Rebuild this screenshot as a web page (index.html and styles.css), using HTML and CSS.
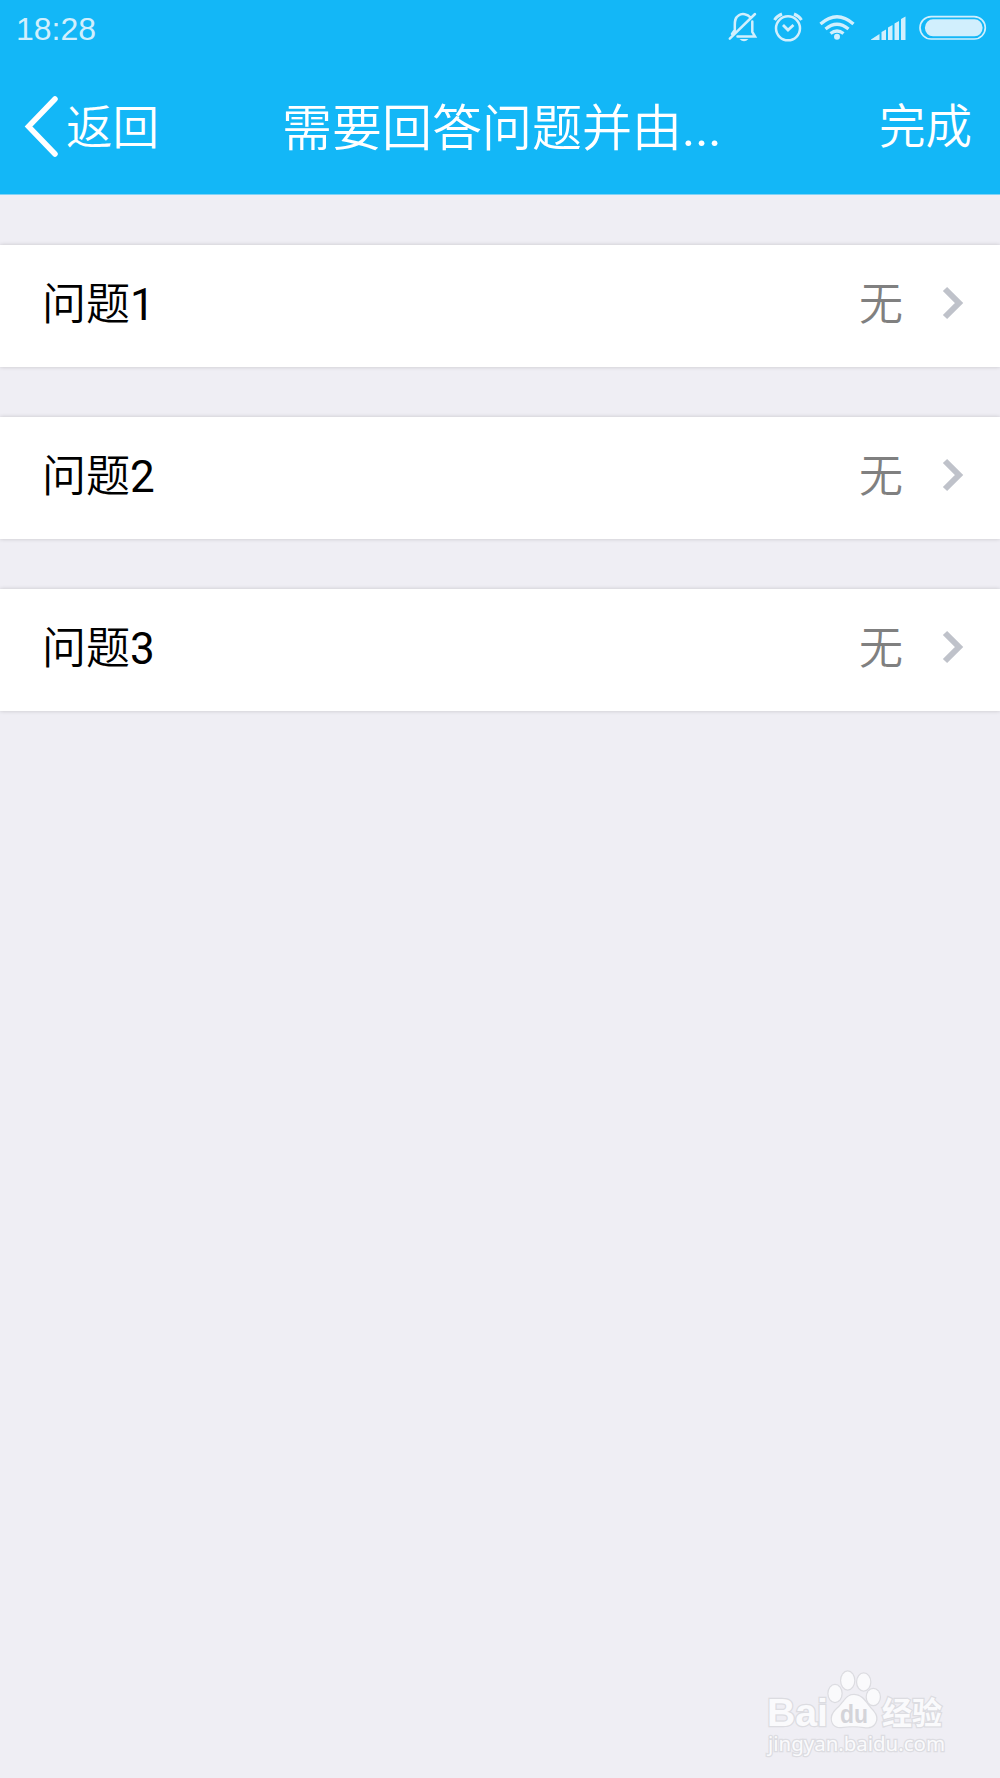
FILE: index.html
```html
<!DOCTYPE html>
<html lang="zh-CN">
<head>
    <meta charset="utf-8">
    <title>需要回答问题</title>
    <link rel="stylesheet" href="styles.css">
</head>
<body>
    <header>
        <div class="status-bar">
            <span class="time">18:28</span>
            <svg class="status-icons" width="260" height="32" viewBox="727 11 260 32" fill="none" stroke="#d1effd" stroke-width="2.5">
                <!-- muted bell -->
                <path d="M750.500 17.500C747.500 14 742 13 738.500 15.500C734.500 18 734.800 22 734.800 26V30L732 34M737.500 36.500H755L752.300 32V21.500M729.800 38.700L755 14" stroke-linecap="round"/>
                <path d="M739.500 39H748.500Q744 43.500 739.500 39Z" fill="#d1effd" stroke="none"/>
                <!-- alarm clock -->
                <circle cx="788" cy="28.300" r="12"/>
                <path d="M783 25L788 30L793.500 25" stroke-width="2.800"/>
                <path d="M774.500 20Q777 16 782 14M794 14Q799 16 801.500 20" stroke-width="3"/>
                <!-- wifi -->
                <path d="M820.500 24Q837 9.500 853.500 24M825.500 29Q837 19.500 848.500 29M830.500 33.500Q837 28.500 843.500 33.500" stroke-width="3.300"/>
                <circle cx="837" cy="36.800" r="3" fill="#d1effd" stroke="none"/>
                <!-- signal -->
                <path d="M871 39.500L879.500 34V40H871ZM881.500 32L886 29.500V40H881.500ZM888 27.500L892.500 25V40H888ZM894.500 23.500L899 21V40H894.500ZM901 19L905.500 16.500V40H901Z" fill="#d1effd" stroke="none"/>
                <!-- battery -->
                <rect x="920" y="16.700" width="65.300" height="22.300" rx="11.150" stroke-width="1.700"/>
                <rect x="925" y="19.300" width="57.500" height="17" rx="8" fill="#d1effd" stroke="none"/>
            </svg>
        </div>
        <div class="nav-bar">
            <a class="back">
                <svg width="34" height="66" viewBox="0 0 34 66">
                    <path d="M31 5L4.500 32.500L31 60" fill="none" stroke="#fff" stroke-width="5.500" stroke-linecap="round"/>
                </svg>
                <span>返回</span>
            </a>
            <h1>需要回答问题并由<span class="dots">...</span></h1>
            <a class="done">完成</a>
        </div>
    </header>

    <main>
        <div class="row">
            <span class="label">问题<span class="num">1</span></span>
            <span class="value">无</span>
            <svg class="arrow" width="22" height="34" viewBox="0 0 22 34"><path d="M3 3L17 17L3 31"/></svg>
        </div>
        <div class="row">
            <span class="label">问题<span class="num">2</span></span>
            <span class="value">无</span>
            <svg class="arrow" width="22" height="34" viewBox="0 0 22 34"><path d="M3 3L17 17L3 31"/></svg>
        </div>
        <div class="row">
            <span class="label">问题<span class="num">3</span></span>
            <span class="value">无</span>
            <svg class="arrow" width="22" height="34" viewBox="0 0 22 34"><path d="M3 3L17 17L3 31"/></svg>
        </div>
    </main>

    <svg class="watermark" width="190" height="92" viewBox="762 1666 190 92">
        <g fill="#fafafc" stroke="#dcdce1" stroke-width="2.500" paint-order="stroke">
            <text class="logo" x="767" y="1726" textLength="61" lengthAdjust="spacingAndGlyphs">Bai</text>
            <ellipse cx="835" cy="1693.500" rx="6.500" ry="8.500"/>
            <ellipse cx="847.700" cy="1680.500" rx="6.500" ry="9"/>
            <ellipse cx="863.700" cy="1682" rx="6.500" ry="8.500"/>
            <ellipse cx="873.300" cy="1697" rx="6.500" ry="8"/>
            <path d="M854 1695C846 1695 844 1703 837 1709C828 1717 832 1728 841 1727C848 1726 858 1726 864 1727C875 1729 880 1719 873 1711C866 1704 863 1695 854 1695Z"/>
            <text class="logo-cn" x="882" y="1724" textLength="60" lengthAdjust="spacingAndGlyphs">经验</text>
            <text class="url" x="768" y="1751" textLength="177" lengthAdjust="spacingAndGlyphs">jingyan.baidu.com</text>
        </g>
        <text class="logo-du" x="840" y="1723" textLength="28" lengthAdjust="spacingAndGlyphs">du</text>
    </svg>
</body>
</html>
```
FILE: styles.css
```css
* {
    box-sizing: border-box;
}
body {
    margin: 0;
    min-height: 1778px;
    background-color: #efeef4;
    font-family: Roboto, "Noto Sans CJK SC", sans-serif;
    position: relative;
}
header {
    height: 195px;
    background-color: #13b7f7;
    border-bottom: 1px solid #81d3f6;
    color: #fff;
}
.status-bar {
    height: 56px;
    padding: 11px 13px 0 16px;
    display: flex;
    justify-content: space-between;
}
.time {
    font-family: "Liberation Sans", sans-serif;
    font-size: 32px;
    line-height: 36px;
    color: #d1effd;
}
.nav-bar {
    height: 138px;
    padding: 0 28px 0 24px;
    display: grid;
    grid-template-columns: 258px 1fr 120px;
    align-items: center;
    font-weight: 350;
}
.back {
    display: flex;
    align-items: center;
    gap: 8px;
    padding-top: 4px;
    font-size: 46.5px;
}
.back span {
    padding-bottom: 8px;
}
.nav-bar h1 {
    margin: 0;
    padding-top: 8px;
    font-size: 50px;
    font-weight: 350;
    line-height: 74px;
    white-space: nowrap;
}
.dots {
    font-weight: 400;
}
.done {
    padding-bottom: 5px;
    font-size: 46.5px;
    text-align: right;
}
.row {
    height: 122px;
    margin-top: 50px;
    padding: 0 36px 6px 42px;
    display: flex;
    align-items: center;
    background-color: #fff;
    box-shadow: 0 0 4px rgba(0,0,0,0.18);
    font-size: 44px;
    font-weight: 350;
    color: #000;
}
.label {
    flex: 1;
    padding-bottom: 4px;
}
.num {
    font-weight: 400;
}
.value {
    color: #808080;
    margin-right: 39px;
    padding-bottom: 4px;
}
.arrow path {
    fill: none;
    stroke: #bfc2ca;
    stroke-width: 6;
}
/* watermark in the corner, over the page */
.watermark {
    position: absolute;
    left: 762px;
    top: 1666px;
}
.logo {
    font: bold 38px "Liberation Sans", sans-serif;
}
.logo-cn {
    font: bold 31px "Noto Sans CJK SC", sans-serif;
}
.logo-du {
    font: bold 26px "Liberation Sans", sans-serif;
    fill: #d4d4d9;
}
.url {
    font: 20px "Noto Sans", sans-serif;
}
```
